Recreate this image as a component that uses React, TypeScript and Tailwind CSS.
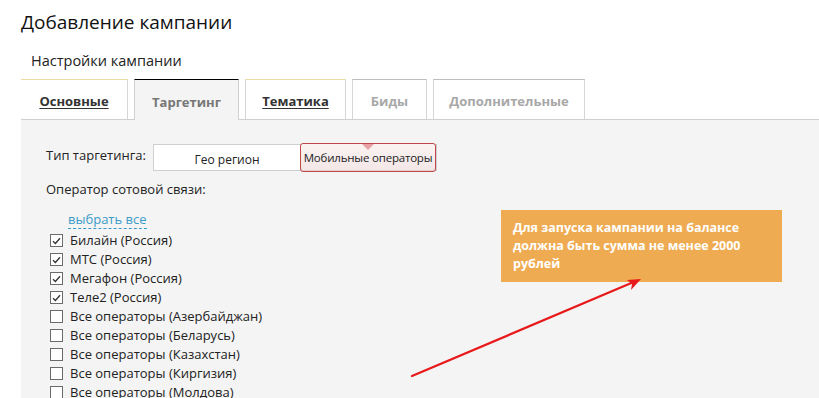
import React from 'react';

const font = { fontFamily: '"Open Sans", "Noto Sans", Arial, sans-serif' };

type Tab = { label: string; state: 'link' | 'active' | 'disabled' };

const tabs: Tab[] = [
  { label: 'Основные', state: 'link' },
  { label: 'Таргетинг', state: 'active' },
  { label: 'Тематика', state: 'link' },
  { label: 'Биды', state: 'disabled' },
  { label: 'Дополнительные', state: 'disabled' },
];

const tabWidths = ['w-[107px]', 'w-[105px]', 'w-[101px]', 'w-[75px]', 'w-[152px]'];

const operators = [
  { name: 'Билайн (Россия)', checked: true },
  { name: 'МТС (Россия)', checked: true },
  { name: 'Мегафон (Россия)', checked: true },
  { name: 'Теле2 (Россия)', checked: true },
  { name: 'Все операторы (Азербайджан)', checked: false },
  { name: 'Все операторы (Беларусь)', checked: false },
  { name: 'Все операторы (Казахстан)', checked: false },
  { name: 'Все операторы (Киргизия)', checked: false },
  { name: 'Все операторы (Молдова)', checked: false },
];

function Checkbox({ checked }: { checked: boolean }) {
  return (
    <span className="flex h-[13px] w-[13px] shrink-0 items-center justify-center border border-[#6b6b6b] bg-white">
      {checked && (
        <svg width="9" height="8" viewBox="0 0 9 8" fill="none">
          <path d="M1 4.2 L3.4 6.5 L8 1.2" stroke="#333" strokeWidth="1.3" />
        </svg>
      )}
    </span>
  );
}

function TabItem({ tab, width, first }: { tab: Tab; width: string; first: boolean }) {
  if (tab.state === 'active') {
    return (
      <div className={`${width} relative -mb-px flex h-[41px] items-center justify-center border-x border-t border-x-[#cfcfcf] border-t-black bg-[#f4f4f4] pt-[5px]`}>
        <span className="text-[13px] font-bold text-[#777]">{tab.label}</span>
      </div>
    );
  }
  const top = tab.state === 'link' ? 'border-t-[#e9dca6]' : 'border-t-[#bdbdbd]';
  const left = first ? 'border-l-0' : 'border-l';
  return (
    <div className={`${width} flex h-[40px] items-center justify-center border-r border-t ${left} border-[#d6d6d6] ${top} bg-white pt-[5px]`}>
      {tab.state === 'link' ? (
        <span className="text-[13px] font-bold text-[#333] underline underline-offset-2">{tab.label}</span>
      ) : (
        <span className="text-[13px] font-bold text-[#a8a8a8]">{tab.label}</span>
      )}
    </div>
  );
}

export default function App() {
  return (
    <div className="relative h-[398px] w-[819px] overflow-hidden bg-white" style={font}>
      <h1 className="pl-[21px] pt-[8px] text-[19px] leading-[28px] text-[#111]">Добавление кампании</h1>
      <div className="pl-[31px] pt-[15px] text-[14.5px] leading-[20px] text-[#222]">Настройки кампании</div>

      <div className="mt-[8px] flex gap-[6px] pl-[21px]">
        {tabs.map((t, i) => (
          <TabItem key={t.label} tab={t} width={tabWidths[i]} first={i === 0} />
        ))}
      </div>

      <div className="ml-[21px] h-[280px] border-t border-[#cfcfcf] bg-[#f4f4f4] pl-[25px] pt-[24px] text-[13px] text-[#222]">
        <div className="flex items-start">
          <span className="w-[107px] pt-[2px]">Тип таргетинга:</span>
          <div className="flex h-[27px] w-[284px] border border-[#cfcfcf] bg-white">
            <div className="flex w-[146px] items-center justify-center pt-[4px] text-[12px] text-[#222]">Гео регион</div>
            <div className="relative -my-[2px] flex w-[136px] items-center justify-center whitespace-nowrap rounded-[3px] border border-[#c0484a] bg-gradient-to-b from-[#fbf3f3] to-[#f3e6e6] text-[11.5px] tracking-[-0.2px] text-[#222] shadow-[inset_0_-1px_0_#e6caca]">
              <span className="absolute left-1/2 top-0 h-0 w-0 -translate-x-1/2 border-x-[6px] border-t-[6px] border-x-transparent border-t-[#e8a2a6]" />
              Мобильные операторы
            </div>
          </div>
        </div>

        <div className="mt-[9px]">Оператор сотовой связи:</div>

        <div className="mt-[10px] pl-[22px]">
          <span className="border-b border-dashed border-[#3a9bc9] text-[13px] leading-[16px] text-[#3a9bc9]">выбрать все</span>
        </div>

        <ul className="mt-[2px] pl-[4px]">
          {operators.map((o) => (
            <li key={o.name} className="flex h-[19px] items-center gap-[7px]">
              <Checkbox checked={o.checked} />
              <span>{o.name}</span>
            </li>
          ))}
        </ul>
      </div>

      <div className="absolute left-[501px] top-[210px] w-[281px] bg-[#efab52] px-[12px] pb-[9px] pt-[9px] text-[12.5px] font-bold leading-[18px] text-white">
        Для запуска кампании на балансе должна быть сумма не менее 2000 рублей
      </div>

      <svg className="absolute left-0 top-0" width="819" height="398" viewBox="0 0 819 398" fill="none">
        <line x1="412" y1="376" x2="636" y2="281" stroke="#e8191b" strokeWidth="2.2" strokeLinecap="round" />
        <path d="M641 279 L627 280 L632 284 L631 290 Z" fill="#e8191b" />
      </svg>
    </div>
  );
}
